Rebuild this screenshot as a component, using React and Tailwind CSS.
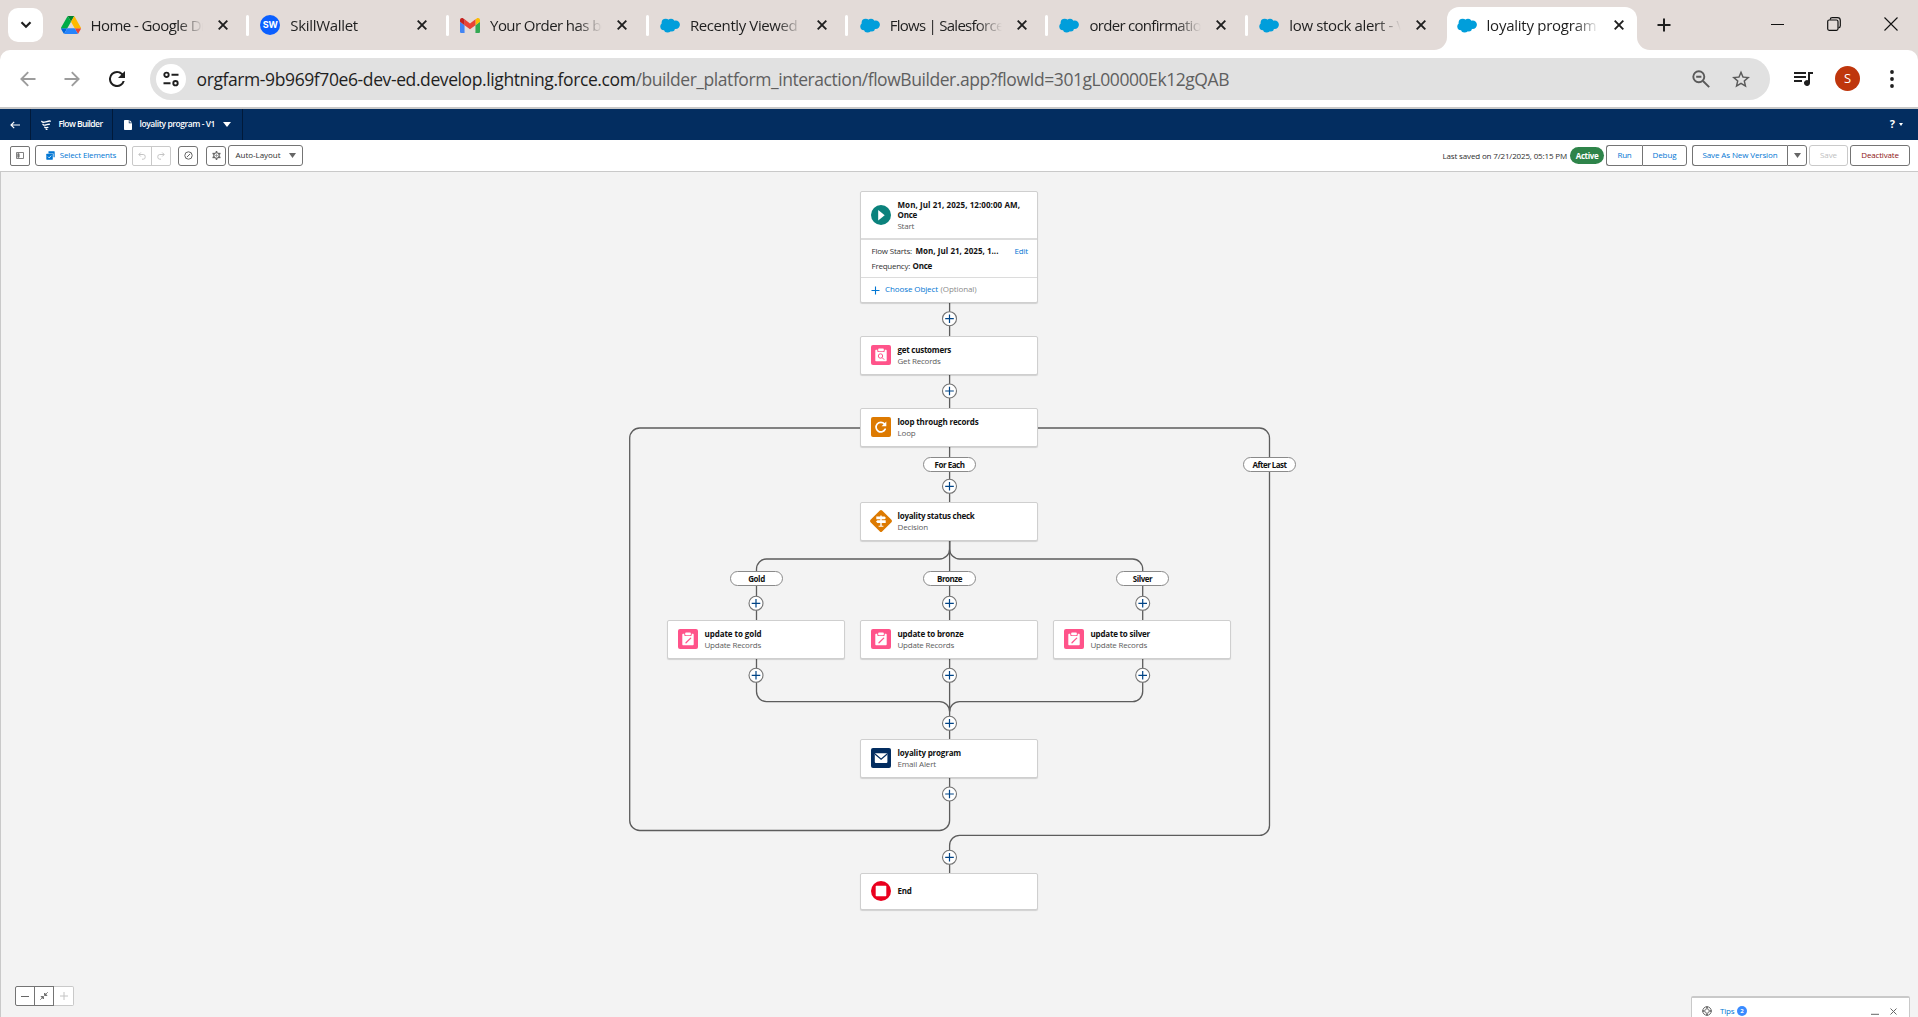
import { useLayoutEffect, useRef } from "react";

/* Text that is tracked so that it fills exactly `w` pixels. */
function Fit({ w, className = "", children }) {
  const ref = useRef(null);
  useLayoutEffect(() => {
    const el = ref.current;
    el.style.letterSpacing = "0px";
    const natural = el.getBoundingClientRect().width;
    el.style.letterSpacing = `${(w - natural) / el.textContent.length}px`;
  }, [w]);
  return (
    <span ref={ref} className={`inline-block w-max whitespace-pre ${className}`}>
      {children}
    </span>
  );
}

/* ---------- Browser chrome ---------- */

function Drive() {
  return (
    <svg viewBox="0 0 87.3 78" className="h-[18px] w-5">
      <path d="m6.6 66.85 3.85 6.65c.8 1.4 1.95 2.5 3.3 3.3l13.75-23.8h-27.5c0 1.55.4 3.1 1.2 4.5z" fill="#0066da" />
      <path d="m43.65 25-13.75-23.8c-1.35.8-2.5 1.9-3.3 3.3l-25.4 44a9.06 9.06 0 0 0-1.2 4.5h27.5z" fill="#00ac47" />
      <path d="m73.55 76.8c1.35-.8 2.5-1.9 3.3-3.3l1.6-2.75 7.65-13.25c.8-1.4 1.2-2.95 1.2-4.5h-27.5l5.85 11.5z" fill="#ea4335" />
      <path d="m43.65 25 13.75-23.8c-1.35-.8-2.9-1.2-4.5-1.2h-18.5c-1.6 0-3.15.45-4.5 1.2z" fill="#00832d" />
      <path d="m59.8 53h-32.3l-13.75 23.8c1.35.8 2.9 1.2 4.5 1.2h50.8c1.6 0 3.15-.45 4.5-1.2z" fill="#2684fc" />
      <path d="m73.4 26.5-12.7-22c-.8-1.4-1.95-2.5-3.3-3.3l-13.75 23.8 16.15 28h27.45c0-1.55-.4-3.1-1.2-4.5z" fill="#ffba00" />
    </svg>
  );
}

function Gmail() {
  return (
    <svg viewBox="52 42 88 66" className="h-[15px] w-5">
      <path fill="#4285f4" d="M58 108h14V74L52 59v43c0 3.32 2.69 6 6 6" />
      <path fill="#34a853" d="M120 108h14c3.32 0 6-2.69 6-6V59l-20 15" />
      <path fill="#fbbc04" d="M120 48v26l20-15v-8c0-7.42-8.47-11.65-14.4-7.2" />
      <path fill="#ea4335" d="M72 74V48l24 18 24-18v26L96 92" />
      <path fill="#c5221f" d="M52 51v8l20 15V48l-5.6-4.2c-5.94-4.45-14.4-.22-14.4 7.2" />
    </svg>
  );
}

function Cloud() {
  return (
    <svg viewBox="0 0 20 15" className="h-[15px] w-5" fill="#009edb">
      <circle cx="5.6" cy="4.7" r="4" />
      <circle cx="11" cy="4.2" r="3.5" />
      <circle cx="15.7" cy="6.7" r="4.2" />
      <circle cx="4" cy="8.6" r="3.7" />
      <circle cx="7.6" cy="11" r="3.6" />
      <circle cx="11.7" cy="10.2" r="3.2" />
      <rect x="5" y="4" width="10" height="6" />
    </svg>
  );
}

function Wallet() {
  return (
    <span className="flex h-5 w-5 items-center justify-center rounded-full bg-[#0b5fff] font-['Inter'] text-[9px] font-bold text-white">
      SW
    </span>
  );
}

function TabClose() {
  return (
    <svg viewBox="0 0 10 10" className="h-[10px] w-[10px]" stroke="#1f1f1f" strokeWidth="1.9" fill="none">
      <path d="M.7.7l8.6 8.6M9.3.7L.7 9.3" />
    </svg>
  );
}

const tabs = [
  { icon: Drive, title: "Home - Google Drive", w: 134 },
  { icon: Wallet, title: "SkillWallet", w: 67.5 },
  { icon: Gmail, title: "Your Order has been", w: 135 },
  { icon: Cloud, title: "Recently Viewed", w: 107.5 },
  { icon: Cloud, title: "Flows | Salesforce", w: 114 },
  { icon: Cloud, title: "order confirmation", w: 120 },
  { icon: Cloud, title: "low stock alert - V1", w: 124 },
  { icon: Cloud, title: "loyality program -", w: 118, active: true },
];

function Tab({ icon: Icon, title, w, active, last }) {
  return (
    <div
      className={`relative flex h-[43px] shrink-0 items-center pb-[7px] ${
        active ? "-ml-[3px] w-[190px] rounded-t-[12px] bg-white pl-[10px]" : "w-[199.8px] pl-[9.5px]"
      }`}
    >
      {active && (
        <>
          <svg viewBox="0 0 13 13" className="absolute -left-[13px] bottom-0 h-[13px] w-[13px]" fill="#fff">
            <path d="M13 0v13H0A13 13 0 0 0 13 0z" />
          </svg>
          <svg viewBox="0 0 13 13" className="absolute -right-[13px] bottom-0 h-[13px] w-[13px]" fill="#fff">
            <path d="M0 0v13h13A13 13 0 0 1 0 0z" />
          </svg>
        </>
      )}
      <span className="flex w-5 shrink-0 justify-center">
        <Icon />
      </span>
      <div className="ml-[10px] w-[112px] shrink-0 overflow-hidden text-[15px] leading-[22px] text-[#1f1f1f] [mask-image:linear-gradient(to_right,#000_78%,transparent_100%)]">
        <Fit w={w}>{title}</Fit>
      </div>
      <span className="ml-[15px] flex">
        <TabClose />
      </span>
      {!active && !last && <span className="ml-[18.5px] h-[21px] w-[3px] rounded-full bg-white" />}
    </div>
  );
}

function TabStrip() {
  return (
    <div className="flex h-[50px] bg-[#e3dbd8] pl-2 pt-[7px]">
      <button className="mt-px flex h-[34px] w-[35px] shrink-0 items-center justify-center rounded-[10px] bg-white">
        <svg viewBox="0 0 12 8" className="h-[8px] w-[12px]" fill="none" stroke="#1f1f1f" strokeWidth="2.2">
          <path d="M1.5 1.3L6 5.8l4.5-4.5" />
        </svg>
      </button>
      <div className="ml-[8px] flex">
        {tabs.map((t, i) => (
          <Tab key={t.title} {...t} last={i === tabs.length - 2} />
        ))}
      </div>
      <svg viewBox="0 0 14 14" className="ml-[20px] mt-[11px] h-[14px] w-[14px]" stroke="#1f1f1f" strokeWidth="2" fill="none">
        <path d="M7 .5v13M.5 7h13" />
      </svg>
      <div className="ml-auto mr-[20px] flex h-[34px] items-center gap-[43px] text-[#111]">
        <svg viewBox="0 0 13 13" className="h-[13px] w-[13px]" stroke="currentColor" fill="none">
          <path d="M0 6.5h13" />
        </svg>
        <svg viewBox="0 0 14 14" className="h-[14px] w-[14px]" stroke="currentColor" strokeWidth="1.2" fill="none">
          <rect x=".7" y="3" width="10.3" height="10.3" rx="1.5" />
          <path d="M3.2 2.6C3.3 1.3 4 .7 5.2.7h5.3c2 0 2.8.8 2.8 2.8v5.3c0 1.3-.6 2-1.9 2.2" />
        </svg>
        <svg viewBox="0 0 14 14" className="h-[14px] w-[14px]" stroke="currentColor" strokeWidth="1.1" fill="none">
          <path d="M.5.5l13 13M13.5.5l-13 13" />
        </svg>
      </div>
    </div>
  );
}

function AddressBar() {
  return (
    <div className="bg-[#e3dbd8]">
      <div className="flex h-[57px] items-center rounded-t-[10px] bg-white pl-[20px]">
        <svg viewBox="0 0 16 16" className="h-[16px] w-[16px]" stroke="#9c9c9c" strokeWidth="1.9" fill="none">
          <path d="M15.5 8H1.7M8.2 1.2L1.4 8l6.8 6.8" />
        </svg>
        <svg viewBox="0 0 16 16" className="ml-[28px] h-[16px] w-[16px]" stroke="#9c9c9c" strokeWidth="1.9" fill="none">
          <path d="M.5 8h13.8M7.8 1.2L14.6 8l-6.8 6.8" />
        </svg>
        <svg viewBox="4 4 16 16" className="ml-[29px] h-[16px] w-[16px]" fill="#1f1f1f">
          <path d="M17.65 6.35A7.96 7.96 0 0 0 12 4a8 8 0 1 0 7.73 10h-2.08A6 6 0 1 1 12 6c1.66 0 3.14.69 4.22 1.78L13 11h7V4z" />
        </svg>
        <div className="ml-[25px] flex h-[42px] w-[1620px] items-center rounded-full bg-[#e1e1e1] pl-[6px]">
          <span className="flex h-[30px] w-[30px] items-center justify-center rounded-full bg-white">
            <svg viewBox="0 0 16 16" className="h-[16px] w-[16px]" stroke="#1f1f1f" strokeWidth="1.9" fill="none">
              <circle cx="3.5" cy="3.8" r="2.2" />
              <path d="M8.5 3.8h7M.5 12.2h7" />
              <circle cx="12.5" cy="12.2" r="2.2" />
            </svg>
          </span>
          <div className="ml-[10.5px] flex text-[17.5px] leading-[26px]">
            <Fit w={439} className="text-[#1f1f1f]">orgfarm-9b969f70e6-dev-ed.develop.lightning.force.com</Fit>
            <Fit w={593.5} className="text-[#5f5f5f]">/builder_platform_interaction/flowBuilder.app?flowId=301gL00000Ek12gQAB</Fit>
          </div>
          <svg viewBox="0 0 18 18" className="ml-auto h-[18px] w-[18px]" stroke="#5a5a5a" strokeWidth="1.9" fill="none">
            <circle cx="6.8" cy="6.8" r="5.5" />
            <path d="M11 11l6.2 6.2M4.2 6.8h5.2" />
          </svg>
          <svg viewBox="2 2 20 19" className="ml-[22px] mr-[20.5px] h-[18px] w-[18px]" fill="#5a5a5a">
            <path d="M22 9.24l-7.19-.62L12 2 9.19 8.63 2 9.24l5.46 4.73L5.82 21 12 17.27 18.18 21l-1.63-7.03zM12 15.4l-3.76 2.27 1-4.28-3.32-2.88 4.38-.38L12 6.1l1.71 4.04 4.38.38-3.32 2.88 1 4.28z" />
          </svg>
        </div>
        <svg viewBox="2 5 20 15" className="ml-[22.5px] h-[15px] w-[20px]" fill="#1f1f1f">
          <path d="M15 6H3v2h12zm0 4H3v2h12zM3 16h8v-2H3zM17 6v8.18A3 3 0 1 0 19 17V8h3V6z" />
        </svg>
        <span className="ml-[22.5px] flex h-[25px] w-[25px] items-center justify-center rounded-full bg-[#bf360c] text-[13px] text-white">S</span>
        <svg viewBox="0 0 4 18" className="ml-[30px] h-[18px] w-[4px]" fill="#1f1f1f">
          <circle cx="2" cy="2" r="1.9" />
          <circle cx="2" cy="9" r="1.9" />
          <circle cx="2" cy="16" r="1.9" />
        </svg>
      </div>
    </div>
  );
}

/* ---------- Flow Builder header ---------- */

function NavBar() {
  return (
    <div className="flex h-[31px] items-center bg-[#032d60] text-[8.5px] font-semibold text-white">
      <div className="flex h-full w-[31px] items-center justify-center border-r border-[#011a3a]">
        <svg viewBox="0 0 10 8" className="h-[8px] w-[10px]" stroke="#fff" strokeWidth="1.2" fill="none">
          <path d="M10 4H1.2M4.2.8L1 4l3.2 3.2" />
        </svg>
      </div>
      <div className="flex h-full w-[82px] items-center border-r border-[#011a3a] pl-[10px]">
        <svg viewBox="0 0 10 10" className="h-[10px] w-[10px]" stroke="#fff" strokeWidth="1.4" fill="none" strokeLinecap="round">
          <path d="M.8 1.400c.9 1.400 2.200 1 3.900.5S8 .9 9.300 1.100M2 4.300c.8 1.300 1.900.9 3 .6S7.200 4.100 8.300 4.200M3.800 7.200c.5.900 1.100.7 1.600.5s.9-.3 1.400-.3M5.300 9.400h.6" />
        </svg>
        <Fit w={44} className="ml-[7.5px]">Flow Builder</Fit>
      </div>
      <div className="flex h-full w-[130px] items-center border-r border-[#011a3a] pl-[11px]">
        <svg viewBox="0 0 8 10" className="h-[10px] w-[8px]" fill="#fff">
          <path d="M.8 0h4v3.2H8V9.200c0 .5-.3.8-.8.8H.8C.3 10 0 9.700 0 9.200V.8C0 .3.3 0 .8 0zM5.500 0L8 2.500H5.500z" />
        </svg>
        <Fit w={75.5} className="ml-[7.5px]">loyality program - V1</Fit>
        <svg viewBox="0 0 8 5" className="ml-[8px] h-[5px] w-[8px]" fill="#fff">
          <path d="M0 0h8L4 5z" />
        </svg>
      </div>
      <div className="ml-auto mr-[15px] flex items-center gap-[4px]">
        <span className="text-[11px] font-bold">?</span>
        <svg viewBox="0 0 4 3" className="h-[3px] w-[4px]" fill="#fff">
          <path d="M0 0h4L2 3z" />
        </svg>
      </div>
    </div>
  );
}

const box = "flex items-center justify-center border border-[#747474] bg-white";

function Toolbar() {
  return (
    <div className="flex h-[32px] items-center border-b border-[#c9c9c9] bg-white pl-[10px] pr-[8px] text-[8px] text-[#0176d3]">
      <div className={`${box} h-[20px] w-[20px] rounded-[2px]`}>
        <svg viewBox="0 0 8 7" className="h-[7px] w-[8px]" stroke="#747474" strokeWidth=".9" fill="none">
          <path d="M.5.5h7v6h-7z" />
          <path d="M1.800 1.700h1.300v3.600H1.800z" fill="#747474" />
        </svg>
      </div>
      <div className={`${box} ml-[5px] h-[21px] w-[92px] rounded-[3px]`}>
        <svg viewBox="0 0 9 9" className="h-[9px] w-[9px]">
          <path d="M2.500.3h5.700c.3 0 .5.2.5.5v5.400H7.500V2.400H2.500z" fill="#0176d3" />
          <path d="M.8 2.800h5.500c.3 0 .5.200.5.500v4.900c0 .3-.2.5-.5.5H.8c-.3 0-.5-.2-.5-.5V3.300c0-.3.200-.5.500-.5z" fill="#0176d3" />
          <path d="M2 5.700l1.200 1.200 2-2.300" stroke="#fff" strokeWidth=".8" fill="none" />
        </svg>
        <Fit w={56.5} className="mb-[2px] ml-[5px]">Select Elements</Fit>
      </div>
      <div className="ml-[5px] flex h-[20px] w-[39px] rounded-[2px] border border-[#c9c9c9]">
        <span className="flex flex-1 items-center justify-center border-r border-[#c9c9c9]">
          <svg viewBox="0 0 8 8" className="h-[8px] w-[8px]" stroke="#c4c4c4" fill="none">
            <path d="M2.800.5L.8 2.500l2 2M1 2.500h4.200a2 2 0 0 1 2 2v.7a2 2 0 0 1-2 2H4" />
          </svg>
        </span>
        <span className="flex flex-1 items-center justify-center">
          <svg viewBox="0 0 8 8" className="h-[8px] w-[8px]" stroke="#c4c4c4" fill="none">
            <path d="M5.200.5l2 2-2 2M7 2.500H2.800a2 2 0 0 0-2 2v.7a2 2 0 0 0 2 2H4" />
          </svg>
        </span>
      </div>
      <div className={`${box} ml-[7px] h-[20px] w-[20px] rounded-[3px]`}>
        <svg viewBox="0 0 9 9" className="h-[9px] w-[9px]" stroke="#666" fill="none">
          <circle cx="4.5" cy="4.5" r="3.7" />
          <path d="M2.800 6.200l3.400-3.400" />
        </svg>
      </div>
      <div className={`${box} ml-[8px] h-[20px] w-[20px] rounded-[3px]`}>
        <svg viewBox="0 0 9 9" className="h-[9px] w-[9px]" stroke="#666" fill="none">
          <circle cx="4.5" cy="4.5" r="2.700" strokeWidth="1.100" />
          <path d="M4.500 0v1.800M4.500 7.200V9M.6 2.250l1.600.9M6.800 5.850l1.600.9M.6 6.750l1.600-.9M6.800 3.150l1.600-.9" strokeWidth="1.500" />
          <circle cx="4.5" cy="4.5" r=".7" strokeWidth=".9" />
        </svg>
      </div>
      <div className={`${box} ml-[2px] h-[21px] w-[75px] rounded-[3px] text-[#2e2e2e]`}>
        <Fit w={45} className="mb-[2px]">Auto-Layout</Fit>
        <svg viewBox="0 0 7 5" className="ml-[8px] h-[5px] w-[7px]" fill="#666">
          <path d="M0 0h7L3.500 5z" />
        </svg>
      </div>
      <Fit w={124.5} className="ml-auto text-[#2e2e2e]">Last saved on 7/21/2025, 05:15 PM</Fit>
      <span className="ml-[3px] flex h-[17px] w-[34px] items-center justify-center rounded-full bg-[#2e844a] font-bold text-white">
        <Fit w={22.5}>Active</Fit>
      </span>
      <div className={`${box} ml-[2px] h-[21px] w-[36px] rounded-l-[3px] border-r-0 pb-[2px]`}>
        <Fit w={14}>Run</Fit>
      </div>
      <div className={`${box} h-[21px] w-[45px] rounded-r-[3px] pb-[2px]`}>
        <Fit w={24}>Debug</Fit>
      </div>
      <div className={`${box} ml-[5px] h-[21px] w-[95px] rounded-l-[3px] border-r-0 pb-[2px]`}>
        <Fit w={75}>Save As New Version</Fit>
      </div>
      <div className={`${box} h-[21px] w-[20px] rounded-r-[3px]`}>
        <svg viewBox="0 0 7 5" className="h-[5px] w-[7px]" fill="#666">
          <path d="M0 0h7L3.500 5z" />
        </svg>
      </div>
      <div className="ml-[2px] flex h-[21px] w-[39px] items-center justify-center rounded-[3px] border border-[#c9c9c9] pb-[2px] text-[#c0c0c0]">
        <Fit w={17}>Save</Fit>
      </div>
      <div className={`${box} ml-[2px] h-[21px] w-[60px] rounded-[3px] pb-[2px] text-[#8e1414]`}>
        <Fit w={37.5}>Deactivate</Fit>
      </div>
    </div>
  );
}

/* ---------- Canvas ---------- */

function RecordsIcon({ search }) {
  return (
    <svg viewBox="0 0 20 20" className="h-5 w-5">
      <rect width="20" height="20" rx="2" fill="#ff538a" />
      <path d="M5.300 4.800h1v1.100c0 .7.500 1.200 1.200 1.200h5c.7 0 1.200-.5 1.200-1.200V4.800h1c.6 0 1 .4 1 1v9.400c0 .6-.4 1-1 1H5.300c-.6 0-1-.4-1-1V5.800c0-.6.4-1 1-1z" fill="#fff" />
      <rect x="7.200" y="3.600" width="5.600" height="2.600" rx=".8" fill="#fff" />
      {search ? (
        <g stroke="#ff538a" strokeWidth="1" fill="none">
          <circle cx="9.500" cy="11" r="2.200" />
          <path d="M11.200 12.700l2 2" />
        </g>
      ) : (
        <path d="M8 13.800l4.700-4.700" stroke="#ff538a" strokeWidth="1.300" fill="none" strokeLinecap="round" />
      )}
    </svg>
  );
}

const icons = {
  get: <RecordsIcon search />,
  update: <RecordsIcon />,
  loop: (
    <svg viewBox="0 0 20 20" className="h-5 w-5">
      <rect width="20" height="20" rx="2" fill="#dd7a01" />
      <path d="M14.200 12.200a4.800 4.800 0 1 1-.8-5.300" stroke="#fff" strokeWidth="1.700" fill="none" strokeLinecap="round" />
      <path d="M15.300 4.600v4.700h-4.700z" fill="#fff" />
    </svg>
  ),
  decision: (
    <svg viewBox="0 0 24 24" className="-mx-0.5 h-6 w-6">
      <rect x="3.800" y="3.800" width="16.400" height="16.400" rx="1.600" fill="#dd7a01" transform="rotate(45 12 12)" />
      <path d="M7.300 7.600h8.300l1.400 1.300-1.400 1.300H7.300zM8.400 11.300h8.300v2.600H8.400L7 12.600zM11.300 6.500h1.400v11h-1.400zM9.600 16.800h4.800v1H9.600z" fill="#fff" />
    </svg>
  ),
  email: (
    <svg viewBox="0 0 20 20" className="h-5 w-5">
      <rect width="20" height="20" rx="2" fill="#032d60" />
      <rect x="3.800" y="5.200" width="12.600" height="9.800" rx="1" fill="#fff" />
      <path d="M4 6l6.100 5.300L16.200 6" stroke="#032d60" strokeWidth="1.200" fill="none" />
    </svg>
  ),
  end: (
    <svg viewBox="0 0 20 20" className="h-5 w-5">
      <circle cx="10" cy="10" r="10" fill="#ea001e" />
      <rect x="4.700" y="4.800" width="10.600" height="10.400" rx=".6" fill="#fff" />
    </svg>
  ),
  start: (
    <svg viewBox="0 0 20 20" className="h-5 w-5">
      <circle cx="10" cy="10" r="10" fill="#0b827c" />
      <path d="M7.200 5v10.400L13.700 10.200z" fill="#fff" />
    </svg>
  ),
};

const cardLook = "absolute w-[178px] rounded-[2px] border border-[#cfcfcf] bg-white shadow-[0_1px_1px_rgba(0,0,0,0.14)]";

/* Card places and connector places are canvas coordinates; the canvas starts at y = 172. */
const cards = [
  { pos: "left-[860px] top-[164px]", icon: "get", title: "get customers", tw: 53.5, sub: "Get Records", sw: 43 },
  { pos: "left-[860px] top-[236px]", icon: "loop", title: "loop through records", tw: 81, sub: "Loop", sw: 18 },
  { pos: "left-[860px] top-[330px]", icon: "decision", title: "loyality status check", tw: 77, sub: "Decision", sw: 30.5 },
  { pos: "left-[667px] top-[448px]", icon: "update", title: "update to gold", tw: 57, sub: "Update Records", sw: 56.5 },
  { pos: "left-[860px] top-[448px]", icon: "update", title: "update to bronze", tw: 66, sub: "Update Records", sw: 56.5 },
  { pos: "left-[1053px] top-[448px]", icon: "update", title: "update to silver", tw: 59.5, sub: "Update Records", sw: 56.5 },
  { pos: "left-[860px] top-[567px]", icon: "email", title: "loyality program", tw: 63.5, sub: "Email Alert", sw: 38.5 },
  { pos: "left-[860px] top-[701px]", icon: "end", title: "End", tw: 14 },
];

function Card({ pos, icon, title, tw, sub, sw }) {
  return (
    <div className={`${cardLook} ${pos} flex items-center pb-px pl-[10px] ${sub ? "h-[39px]" : "h-[37px]"}`}>
      {icons[icon]}
      <div className="mb-px ml-[6.5px] flex flex-col items-start text-[8px] leading-[11px]">
        <Fit w={tw} className="font-bold text-[#111]">{title}</Fit>
        {sub && <Fit w={sw} className="text-[#5c5c5c]">{sub}</Fit>}
      </div>
    </div>
  );
}

function StartCard() {
  return (
    <div className={`${cardLook} left-[860px] top-[19px] h-[112px] text-[8px]`}>
      <div className="flex h-[48px] items-center border-b-2 border-[#dcdcdc] pl-[10px]">
        {icons.start}
        <div className="ml-[6.5px] flex flex-col items-start leading-[10px]">
          <Fit w={122.5} className="font-bold text-[#111]">Mon, Jul 21, 2025, 12:00:00 AM,</Fit>
          <Fit w={19.5} className="font-bold text-[#111]">Once</Fit>
          <Fit w={16.5} className="mt-px text-[#5c5c5c]">Start</Fit>
        </div>
      </div>
      <div className="flex h-[38px] flex-col justify-center gap-[4px] border-b border-[#dcdcdc] pb-[2px] pl-[10.5px] pr-[9px] leading-[11px] text-[#333]">
        <div className="flex">
          <Fit w={40.5}>Flow Starts:</Fit>
          <Fit w={83} className="ml-[3.5px] font-bold text-[#111]">Mon, Jul 21, 2025, 1...</Fit>
          <Fit w={13.5} className="ml-auto text-[#0176d3]">Edit</Fit>
        </div>
        <div className="flex">
          <Fit w={38.5}>Frequency:</Fit>
          <Fit w={19.5} className="ml-[2.5px] font-bold text-[#111]">Once</Fit>
        </div>
      </div>
      <div className="flex h-[24px] items-center pl-[10px]">
        <svg viewBox="0 0 9 9" className="h-[9px] w-[9px]" stroke="#0176d3" strokeWidth="1.100" fill="none">
          <path d="M4.500.5v8M.5 4.500h8" />
        </svg>
        <Fit w={53} className="mb-[2px] ml-[5px] text-[#0176d3]">Choose Object</Fit>
        <Fit w={36} className="mb-[2px] ml-[2.5px] text-[#8a8a8a]">(Optional)</Fit>
      </div>
    </div>
  );
}

const pluses = [
  [949.5, 146.7], [949.5, 219], [949.5, 314.3],
  [756, 431.3], [949.5, 431.3], [1142.7, 431.3],
  [756, 503.3], [949.5, 503.3], [1142.7, 503.3],
  [949.5, 551.3], [949.5, 622], [949.5, 685.3],
];

function Connectors() {
  return (
    <svg viewBox="0 0 1918 845" className="absolute left-0 top-0 h-[845px] w-[1918px] max-w-none" fill="none">
      <g stroke="#5c5c5c" strokeWidth="1.300">
        <path d="M949.600 131v448M949.600 605v43.500a10 10 0 0 1-10 10H639.700a10 10 0 0 1-10-10V266a10 10 0 0 1 10-10H860" />
        <path d="M1038 256h221.500a10 10 0 0 1 10 10v387.400a10 10 0 0 1-10 10H959.600a10 10 0 0 0-10 10V702" />
        <path d="M949.600 368v9a10 10 0 0 1-10 10H766.500a10 10 0 0 0-10 10v122.600a10 10 0 0 0 10 10h173.100a10 10 0 0 1 10 10" />
        <path d="M949.600 368v9a10 10 0 0 0 10 10h173.100a10 10 0 0 1 10 10v122.600a10 10 0 0 1-10 10H959.600a10 10 0 0 0-10 10" />
      </g>
      {pluses.map(([x, y]) => (
        <g key={`${x}-${y}`}>
          <circle cx={x} cy={y} r="7" fill="#fff" stroke="#747474" strokeWidth="1.100" />
          <path d={`M${x - 4.3} ${y}h8.600M${x} ${y - 4.3}v8.600`} stroke="#014486" strokeWidth="1.200" />
        </g>
      ))}
    </svg>
  );
}

const pills = [
  { pos: "left-[923px] top-[285px]", text: "For Each", w: 30 },
  { pos: "left-[1243px] top-[285px]", text: "After Last", w: 34 },
  { pos: "left-[730px] top-[399px]", text: "Gold", w: 16.5 },
  { pos: "left-[923px] top-[399px]", text: "Bronze", w: 25 },
  { pos: "left-[1116px] top-[399px]", text: "Silver", w: 19.5 },
];

function Canvas() {
  return (
    <div className="relative flex-1 overflow-hidden border-l border-[#c9c9c9] bg-[#f3f3f3]">
      <div className="absolute -left-px top-0">
        <Connectors />
        <StartCard />
        {cards.map((c) => (
          <Card key={c.title} {...c} />
        ))}
        {pills.map((p) => (
          <div
            key={p.text}
            className={`absolute ${p.pos} flex h-[15px] w-[53px] items-center justify-center rounded-full border border-[#8a8a8a] bg-white pt-px text-[8px] font-bold text-[#111]`}
          >
            <Fit w={p.w}>{p.text}</Fit>
          </div>
        ))}
      </div>

      <div className="absolute bottom-[11px] left-[14px] flex h-[20px]">
        <span className={`${box} w-[20px] rounded-l-[2px]`}>
          <svg viewBox="0 0 8 8" className="h-[8px] w-[8px]" stroke="#666" fill="none">
            <path d="M0 4.500h8" />
          </svg>
        </span>
        <span className={`${box} -ml-px w-[20px]`}>
          <svg viewBox="0 0 8 8" className="h-[8px] w-[8px]" stroke="#666" fill="#666" strokeWidth=".8">
            <path d="M7.800.2L5.500 2.500M.2 7.800l2.300-2.300" />
            <path d="M4.500 1v2.500H7zM3.500 7V4.500H1z" />
          </svg>
        </span>
        <span className="flex w-[20px] items-center justify-center rounded-r-[2px] border border-l-0 border-[#c9c9c9] bg-white">
          <svg viewBox="0 0 8 8" className="h-[8px] w-[8px]" stroke="#c4c4c4" fill="none">
            <path d="M0 4h8M4 0v8" />
          </svg>
        </span>
      </div>

      <div className="absolute bottom-0 right-[8px] flex h-[21px] w-[219px] items-center rounded-t-[2px] border-x border-t-2 border-[#c9c9c9] bg-white pl-[10px] pr-[12px] pt-[7px]">
        <svg viewBox="0 0 10 10" className="h-[10px] w-[10px]" stroke="#5c5c5c" fill="none">
          <circle cx="5" cy="5" r="4.300" strokeWidth=".9" />
          <circle cx="5" cy="5" r="2.200" strokeWidth=".8" />
          <path d="M5 .5v2M5 7.500v2M.5 5h2M7.500 5h2" strokeWidth="1.600" />
        </svg>
        <Fit w={14.5} className="ml-[8px] text-[8px] text-[#0176d3]">Tips</Fit>
        <span className="ml-[2.5px] flex h-[10px] w-[10px] items-center justify-center rounded-full bg-[#3a8bff] text-[6px] font-bold text-white">2</span>
        <svg viewBox="0 0 8 8" className="ml-auto h-[8px] w-[8px]" stroke="#666" fill="none">
          <path d="M0 7.300h8" />
        </svg>
        <svg viewBox="0 0 7 7" className="ml-[11px] h-[7px] w-[7px]" stroke="#666" fill="none">
          <path d="M.5.5l6 6M6.500.5l-6 6" />
        </svg>
      </div>
    </div>
  );
}

export default function App() {
  return (
    <div className="flex h-[1017px] w-[1918px] flex-col overflow-hidden bg-white font-['Open_Sans','Noto_Sans',sans-serif]">
      <TabStrip />
      <AddressBar />
      <div className="h-[2px] bg-[#c8c8c8]" />
      <NavBar />
      <Toolbar />
      <Canvas />
    </div>
  );
}
